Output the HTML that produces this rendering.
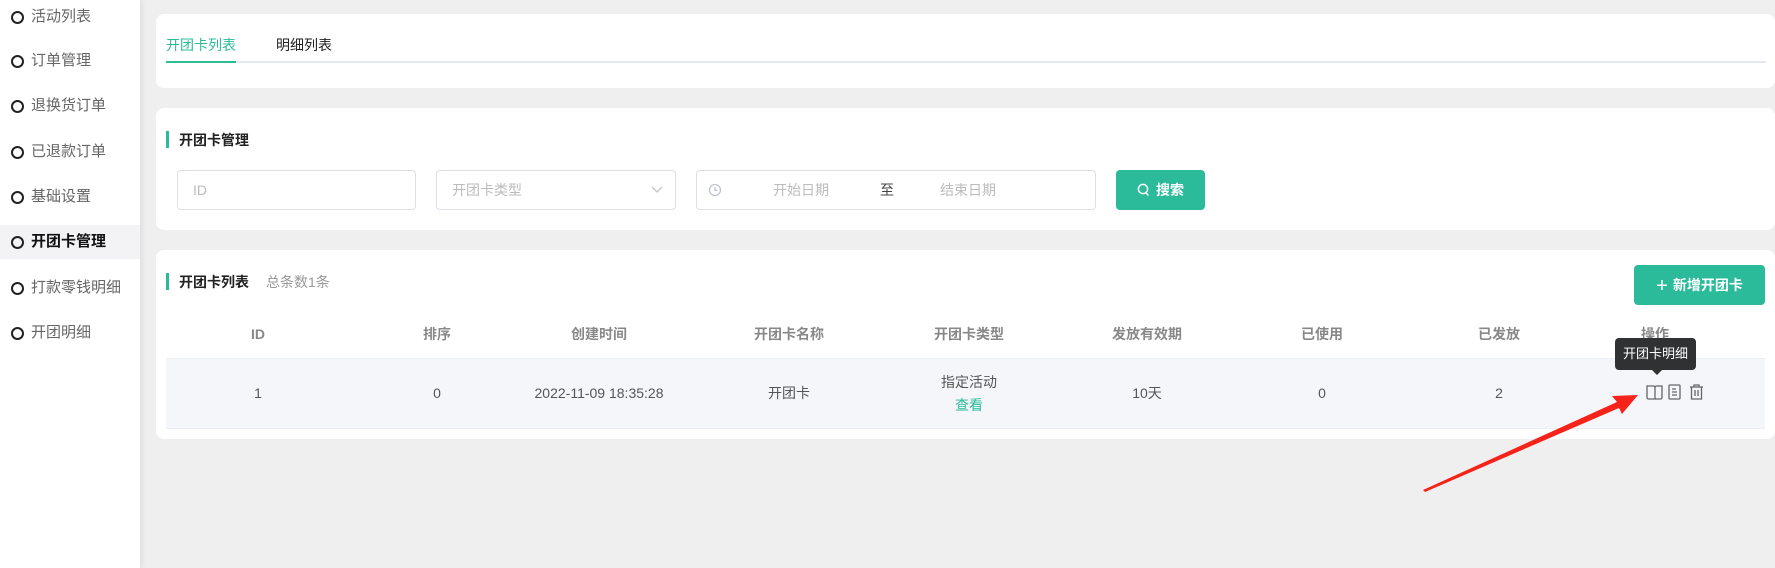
<!DOCTYPE html>
<html><head><meta charset="utf-8"><style>
*{margin:0;padding:0;box-sizing:border-box}
body{width:1775px;height:568px;background:#efefef;font-family:"Liberation Sans","Noto Sans CJK SC",sans-serif;position:relative;overflow:hidden;color:#333}
.a{position:absolute}
.side{left:0;top:0;width:140px;height:568px;background:#fff;box-shadow:2px 0 6px rgba(0,0,0,.08)}
.mi{position:absolute;left:0;width:140px;height:34px;line-height:34px;font-size:15px;color:#666;padding-left:31px}
.mi:before{content:"";position:absolute;left:11px;top:11px;width:9px;height:9px;border:2px solid #222;border-radius:50%}
.mi.on{background:#f3f3f5;color:#111;font-weight:bold}
.card{position:absolute;left:156px;width:1619px;background:#fff;border-radius:8px}
.tt{position:absolute;font-size:14px;font-weight:bold;color:#222;padding-left:13px}
.tt:before{content:"";position:absolute;left:0;top:1px;width:3px;height:17px;background:#2bbb99}
.inp{position:absolute;top:170px;height:40px;border:1px solid #dcdfe6;border-radius:4px;font-size:14px;color:#bbb;line-height:38px}
.btn{position:absolute;background:#2bbb9b;color:#fff;border-radius:4px;font-size:14px;font-weight:bold;text-align:center}
.th{position:absolute;top:324px;height:20px;line-height:20px;font-size:14px;color:#888;font-weight:bold;transform:translateX(-50%);white-space:nowrap}
.td{position:absolute;top:383px;height:20px;line-height:20px;font-size:14px;color:#555;transform:translateX(-50%);white-space:nowrap}
</style></head><body>
<div class="a side">
<div class="mi" style="top:0">活动列表</div>
<div class="mi" style="top:44px">订单管理</div>
<div class="mi" style="top:89px">退换货订单</div>
<div class="mi" style="top:135px">已退款订单</div>
<div class="mi" style="top:180px">基础设置</div>
<div class="mi on" style="top:225px">开团卡管理</div>
<div class="mi" style="top:271px">打款零钱明细</div>
<div class="mi" style="top:316px">开团明细</div>
</div>

<div class="card" style="top:14px;height:74px">
<div class="a" style="left:10px;top:47px;width:1600px;height:2px;background:#e4e7ed"></div>
<div class="a" style="left:10px;top:47px;width:70px;height:2px;background:#2bbb99"></div>
<div class="a" style="left:10px;top:21px;font-size:14px;color:#2bbb99">开团卡列表</div>
<div class="a" style="left:120px;top:21px;font-size:14px;color:#222">明细列表</div>
</div>

<div class="card" style="top:108px;height:122px">
<div class="tt" style="left:10px;top:22px">开团卡管理</div>
</div>
<div class="inp" style="left:177px;width:239px;padding-left:15px">ID</div>
<div class="inp" style="left:436px;width:240px;padding-left:15px">开团卡类型<span style="position:absolute;right:12px;top:-1px;color:#bbb">
<svg width="12" height="8" viewBox="0 0 12 8"><path d="M1 1l5 5 5-5" fill="none" stroke="#c0c4cc" stroke-width="1.3"/></svg></span></div>
<div class="inp" style="left:696px;width:400px">
<svg class="a" style="left:11px;top:12px" width="14" height="14" viewBox="0 0 14 14"><circle cx="7" cy="7" r="5.5" fill="none" stroke="#c0c4cc" stroke-width="1.3"/><path d="M7 4v3.3h2.5" fill="none" stroke="#c0c4cc" stroke-width="1.3"/></svg>
<span class="a" style="left:76px">开始日期</span><span class="a" style="left:183px;color:#444">至</span><span class="a" style="left:243px">结束日期</span></div>
<div class="btn" style="left:1116px;top:170px;width:89px;height:40px;line-height:40px">
<svg style="vertical-align:-2px;margin-right:6px" width="13" height="14" viewBox="0 0 13 14"><circle cx="6" cy="6" r="4.6" fill="none" stroke="#fff" stroke-width="1.5"/><path d="M9 10l2.5 2.5" stroke="#fff" stroke-width="1.5"/></svg>搜索</div>

<div class="card" style="top:250px;height:189px">
<div class="tt" style="left:10px;top:22px">开团卡列表<span style="font-weight:normal;color:#999;margin-left:17px">总条数1条</span></div>
</div>
<div class="btn" style="left:1634px;top:265px;width:131px;height:40px;line-height:40px"><span style="font-size:20px;font-weight:normal;vertical-align:-2px;margin-right:5px">+</span>新增开团卡</div>
<div class="a" style="left:166px;top:358px;width:1599px;height:71px;background:#f5f6fa;border-top:1px solid #ebeef5;border-bottom:1px solid #ebeef5"></div>
<div class="th" style="left:258px">ID</div>
<div class="th" style="left:437px">排序</div>
<div class="th" style="left:599px">创建时间</div>
<div class="th" style="left:789px">开团卡名称</div>
<div class="th" style="left:969px">开团卡类型</div>
<div class="th" style="left:1147px">发放有效期</div>
<div class="th" style="left:1322px">已使用</div>
<div class="th" style="left:1499px">已发放</div>
<div class="th" style="left:1655px">操作</div>
<div class="td" style="left:258px">1</div>
<div class="td" style="left:437px">0</div>
<div class="td" style="left:599px">2022-11-09 18:35:28</div>
<div class="td" style="left:789px">开团卡</div>
<div class="td" style="left:969px;top:372px">指定活动</div>
<div class="td" style="left:969px;top:395px;color:#2bbb99">查看</div>
<div class="td" style="left:1147px">10天</div>
<div class="td" style="left:1322px">0</div>
<div class="td" style="left:1499px">2</div>

<div class="a" style="left:1615px;top:338px;width:81px;height:32px;background:#303133;border-radius:4px;color:#fff;font-size:13px;line-height:32px;text-align:center">开团卡明细</div>
<div class="a" style="left:1651px;top:369px;width:0;height:0;border-left:6px solid transparent;border-right:6px solid transparent;border-top:6px solid #303133"></div>
<svg class="a" style="left:1645px;top:383px" width="80" height="18" viewBox="0 0 80 18">
<path d="M2 3h6.5a1.5 1.5 0 011.5 1.5V16H3.5A1.5 1.5 0 012 14.5zM10 4.5A1.5 1.5 0 0111.5 3H17v11.5a1.5 1.5 0 01-1.5 1.5H10" fill="none" stroke="#666" stroke-width="1.3"/>
<rect x="24" y="2" width="11" height="14" rx="1" fill="none" stroke="#666" stroke-width="1.3"/><path d="M27 6h4M27 9h5M27 12h5" stroke="#666" stroke-width="1.2"/>
<path d="M45 4h13M49 4V2h5v2M46.5 4v12h10V4M50 7v6M53 7v6" fill="none" stroke="#666" stroke-width="1.3"/>
</svg>
<svg class="a" style="left:0;top:0" width="1775" height="568"><polygon points="1423,490 1617,402 1612,396 1638,395 1622,414 1619,408 1425,492" fill="#f5231a"/></svg>
</body></html>
